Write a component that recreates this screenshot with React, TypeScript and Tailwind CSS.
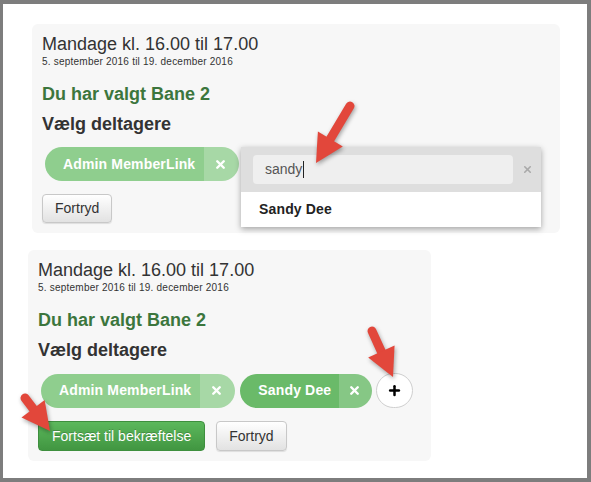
import React from 'react';
import { X, Plus } from 'lucide-react';

type Pt = [number, number];

// red callout arrow, tail -> tip, in page coordinates
const Arrow = ({ tail, tip }: { tail: Pt; tip: Pt }) => {
  const dx = tip[0] - tail[0];
  const dy = tip[1] - tail[1];
  const len = Math.hypot(dx, dy);
  const ux = dx / len;
  const uy = dy / len;
  const nx = -uy;
  const ny = ux;
  const headLen = 28;
  const headW = 29;
  const bx = tip[0] - ux * headLen;
  const by = tip[1] - uy * headLen;
  const pts = [
    [bx + (nx * headW) / 2, by + (ny * headW) / 2],
    tip,
    [bx - (nx * headW) / 2, by - (ny * headW) / 2],
  ]
    .map(p => p.join(','))
    .join(' ');
  return (
    <g>
      <line
        x1={tail[0]}
        y1={tail[1]}
        x2={bx + ux * 3}
        y2={by + uy * 3}
        stroke="#e2473b"
        strokeWidth={9}
        strokeLinecap="round"
      />
      <polygon points={pts} fill="#e2473b" />
    </g>
  );
};

const Pill = ({ name, faded }: { name: string; faded?: boolean }) => (
  <div className="flex h-[34px] overflow-hidden rounded-full text-[14px] font-bold tracking-[0.15px] text-white">
    <div
      className={
        faded
          ? 'flex items-center bg-[#8fce8e] pl-[18px] pr-[9px]'
          : 'flex items-center bg-[#6aba69] pl-[18px] pr-[8px]'
      }
    >
      {name}
    </div>
    <div
      className={
        faded
          ? 'flex w-[35px] items-center justify-center bg-[#a7d8a6] pr-[2px]'
          : 'flex w-[33px] items-center justify-center bg-[#86c785] pr-[2px]'
      }
    >
      <X size={13} strokeWidth={4.5} />
    </div>
  </div>
);

const CancelButton = ({ h }: { h: string }) => (
  <button
    className={`${h} rounded-[4px] border border-[#c8c8c8] bg-gradient-to-b from-white to-[#e2e2e2] px-[12px] text-[14px] text-[#333] shadow-[0_1px_1px_rgba(0,0,0,0.1)]`}
  >
    Fortryd
  </button>
);

const Heading = () => (
  <>
    <div className="text-[18px] leading-[20px] text-[#333]">Mandage kl. 16.00 til 17.00</div>
    <div className="mt-[2px] text-[10px] leading-[12px] tracking-[0.22px] text-[#333]">
      5. september 2016 til 19. december 2016
    </div>
    <div className="mt-[16px] text-[18px] font-bold leading-[20px] text-[#3c763d]">
      Du har valgt Bane 2
    </div>
    <div className="mt-[10px] text-[18px] font-bold leading-[20px] text-[#333]">Vælg deltagere</div>
  </>
);

const SearchDropdown = () => (
  <div className="absolute left-[209px] top-[123px] w-[300px] bg-white shadow-[0_2px_6px_rgba(0,0,0,0.35)]">
    <div className="flex h-[45px] items-center bg-[#dedede] pl-[12px]">
      <div className="flex h-[29px] w-[260px] items-center rounded-[4px] bg-[#efefef] pl-[12px] text-[14px] text-[#555]">
        sandy
        <span className="ml-[1px] h-[17px] w-px bg-[#222]" />
      </div>
      <div className="flex flex-1 items-center justify-center text-[#a9a9a9]">
        <X size={11} strokeWidth={3.5} />
      </div>
    </div>
    <div className="flex h-[35px] items-center pl-[18px] text-[14px] font-bold tracking-[0.15px] text-[#222]">
      Sandy Dee
    </div>
  </div>
);

const App = () => {
  return (
    <div className="relative h-[482px] w-[591px] border-b-4 border-l-[3px] border-r-4 border-t-4 border-[#7d7d7d] bg-white font-['Liberation_Sans',Arial,sans-serif]">
      <div className="relative ml-[29px] mt-[20px] w-[528px] rounded-md bg-[#f7f7f7] px-[10px] pb-[10px] pt-[10px]">
        <Heading />
        <div className="ml-[3px] mt-[13px] flex">
          <Pill name="Admin MemberLink" faded />
        </div>
        <div className="mt-[13px] flex">
          <CancelButton h="h-[29px]" />
        </div>
        <SearchDropdown />
      </div>

      <div className="ml-[25px] mt-[17px] w-[403px] rounded-md bg-[#f7f7f7] px-[10px] pb-[10px] pt-[10px]">
        <Heading />
        <div className="ml-[3px] mt-[13px] flex items-center">
          <Pill name="Admin MemberLink" faded />
          <div className="ml-[5px]">
            <Pill name="Sandy Dee" />
          </div>
          <div className="ml-[4px] flex h-[35px] w-[37px] items-center justify-center rounded-full border border-[#cfcfcf] bg-white text-black">
            <Plus size={15} strokeWidth={4} />
          </div>
        </div>
        <div className="mt-[13px] flex gap-[11px]">
          <button className="h-[30px] rounded-[4px] border border-[#3e8f3e] bg-gradient-to-b from-[#5cb85c] to-[#419641] px-[13px] text-[14px] text-white [text-shadow:0_-1px_0_rgba(0,0,0,0.2)]">
            Fortsæt til bekræftelse
          </button>
          <CancelButton h="h-[30px]" />
        </div>
      </div>

      <svg
        className="pointer-events-none absolute left-[-3px] top-[-4px] h-[482px] w-[591px] [filter:drop-shadow(1px_2px_2px_rgba(0,0,0,0.35))]"
        viewBox="0 0 591 482"
      >
        <Arrow tail={[350, 106]} tip={[316, 163]} />
        <Arrow tail={[25, 398]} tip={[50, 431]} />
        <Arrow tail={[372, 331]} tip={[393, 377]} />
      </svg>
    </div>
  );
};

export default App;
